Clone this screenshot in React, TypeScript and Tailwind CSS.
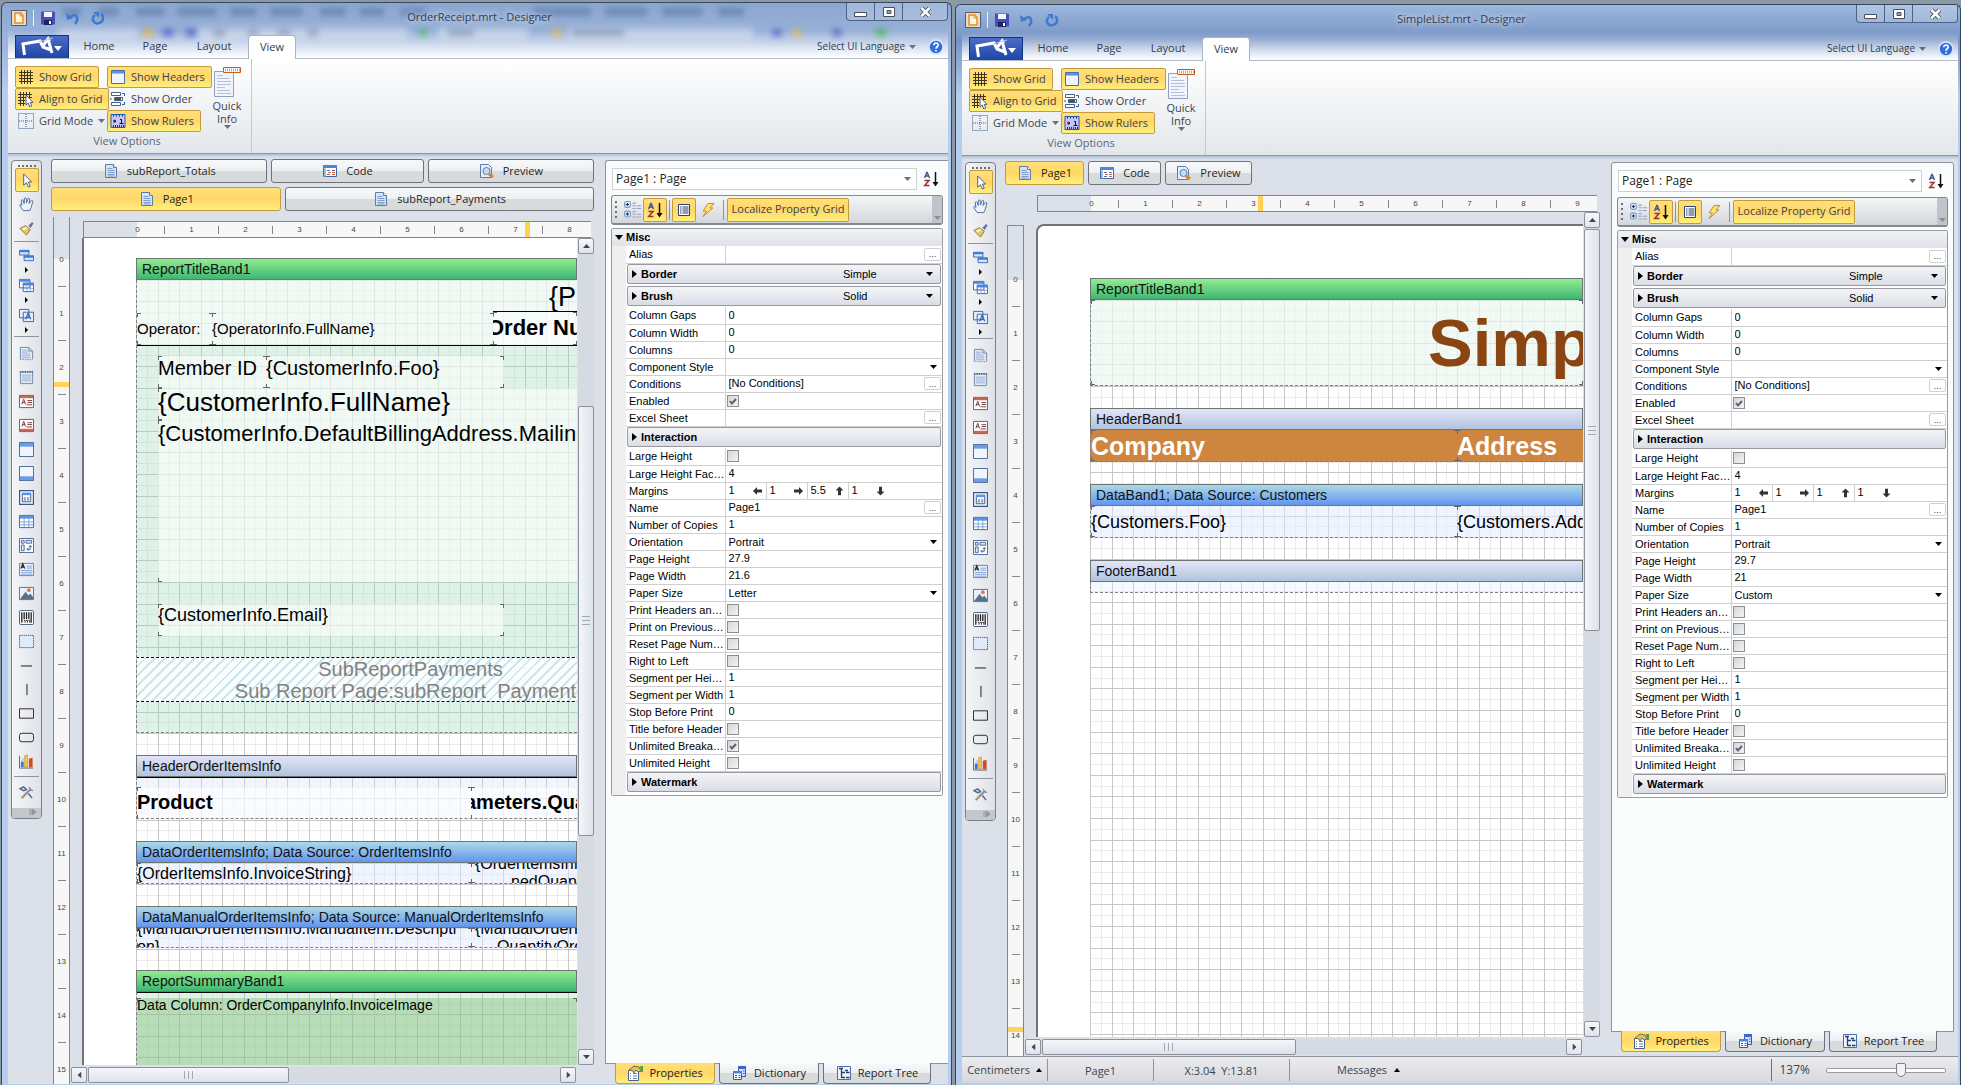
import { useId, type ReactNode } from "react";
import clsx from "clsx";

const pressed = "border border-[#c29b3c] bg-linear-to-b from-[#ffe07a] via-[#ffd768] to-[#fff07c]";
const raised = "border border-[#6f7278] bg-linear-to-b from-[#f8f9fa] from-0% via-[#eeeff0] via-50% to-[#d8dbdc] to-52%";

/* ---------- icons ---------- */

type IconProps = { children: ReactNode; size?: number };

function Icon({ children, size = 16 }: IconProps) {
  return (
    <svg width={size} height={size} viewBox="0 0 16 16" fill="none" className="shrink-0" aria-hidden="true">
      {children}
    </svg>
  );
}

const PageIcon = () => (
  <Icon>
    <path d="M2.5 1.5h8l3 3v10h-11z" fill="#d5e3f7" stroke="#5d7ca8" />
    <path d="M10.5 1.5v3h3" fill="#fff" stroke="#5d7ca8" />
    <path d="M4.5 5.5h5M4.5 7.5h7M4.5 9.5h7M4.5 11.5h7M4.5 13h7" stroke="#7f9cc8" />
  </Icon>
);

const CodeIcon = () => (
  <Icon>
    <path d="M1.5 2.5h13v11h-13z" fill="#fff" stroke="#3f66a8" />
    <path d="M1 2h14v3H1z" fill="#4f86dc" />
    <path d="M3 5.5v8" stroke="#9db9e4" strokeWidth="2" />
    <path d="M5 7.5h3M10 7.5h3M5 11.5h3" stroke="#5a6f97" />
    <path d="M6 9.5h3M10 9.5h3M10 11.5h3" stroke="#e0603c" />
  </Icon>
);

const PreviewIcon = () => (
  <Icon>
    <path d="M1.5 1.5h8l3 3v10h-11z" fill="#e6eefb" stroke="#5d7ca8" />
    <circle cx="7.5" cy="8" r="3.5" fill="#bfe0f7" stroke="#5b7ba6" />
    <path d="M10 11l4 3" stroke="#d98726" strokeWidth="3" />
  </Icon>
);

const GridIcon = () => (
  <Icon>
    <path d="M3.5 1v14M6.5 1v14M9.5 1v14M12.5 1v14M1 3.5h14M1 6.5h14M1 9.5h14M1 12.5h14" stroke="#3c3524" />
  </Icon>
);

const AlignIcon = () => (
  <Icon>
    <path d="M2.5 1v14M5.5 1v14M8.5 1v6M11.5 1v5M0 3.5h14M0 6.5h14M0 9.5h7M0 12.5h7" stroke="#3c3524" />
    <path d="M8 4v10l2.2-2 1.6 4 2-1-1.6-3.6H15z" fill="#fff" stroke="#4a5f88" />
  </Icon>
);

const GridModeIcon = () => (
  <Icon>
    <path d="M.5.5h15v15H.5zM8 1v14M1 8h14" stroke="#3c5c98" strokeDasharray="1 1" />
  </Icon>
);

const HeadersIcon = () => (
  <Icon>
    <path d="M1.5 1.5h13v13h-13z" fill="#eef3fc" stroke="#4a6fae" />
    <path d="M2 2h12v2.5H2z" fill="#5c90e6" />
  </Icon>
);

const OrderIcon = () => (
  <Icon>
    <path d="M1.5 1.5h9v3h-9zM4.5 6.5h8v3h-8zM1.5 11.5h9v3h-9z" fill="#fff" stroke="#46618f" />
    <path d="M5 8h6" stroke="#111" strokeWidth="1.5" />
    <path d="M12 2.5h2.5V5M0 8h2M12 13.5h2.5V11" stroke="#2f5f9b" />
  </Icon>
);

const RulersIcon = () => (
  <Icon>
    <path d="M1 1.5h14v13H1z" fill="#c7c4fa" stroke="#1d5dab" />
    <path
      d="M3.5 12v2M5.5 12v2M7.5 12v2M9.5 12v2M11.5 12v2M13.5 12v2M3.5 2v1.5M6.5 2v1.5M9.5 2v1.5M12.5 2v1.5"
      stroke="#2b2c66"
    />
    <path d="M4 7v2.5L6 8zM10 6.5h1.5v4M9.5 10.5h4" stroke="#111" />
  </Icon>
);

const SortIcon = () => (
  <Icon>
    <path d="M1.5 7L3.8 1.5h.4L6.5 7M2.3 5h3.4" stroke="#3b5596" strokeWidth="1.4" />
    <path d="M1.5 9.5H6l-4.3 5h4.8" stroke="#9b3535" strokeWidth="1.5" />
    <path d="M12.5 1v12" stroke="#111" strokeWidth="1.5" />
    <path d="M9.5 11h6l-3 4.5z" fill="#111" />
  </Icon>
);

const CategoryIcon = () => (
  <Icon size={17}>
    <rect x=".5" y=".5" width="5.5" height="5.5" rx="1.5" fill="#dcebfb" stroke="#7b98c4" />
    <rect x=".5" y="9.5" width="5.5" height="5.5" rx="1.5" fill="#dcebfb" stroke="#7b98c4" />
    <path d="M3.2 1.8v3M1.7 3.3h3M3.2 10.8v3M1.7 12.3h3" stroke="#1c2c50" />
    <path d="M8 2h3M8 4.5h3M8 7h3M8 10h3M8 12.5h3M8 15h3M12 4.5h4M12 7h4M12 12.5h4M12 15h4" stroke="#93a5c2" />
  </Icon>
);

const ListIcon = () => (
  <Icon>
    <path d="M2.5 2.5h11v11h-11z" fill="#fff" stroke="#2e4373" />
    <path d="M4 5h1.5M4 7h1.5M4 9h1.5M4 11h1.5M6.5 5h6M6.5 7h6M6.5 9h6M6.5 11h6" stroke="#24396d" />
  </Icon>
);

const BoltIcon = () => (
  <Icon>
    <path d="M8 1.5h6L9.8 6h3L3 14.5 6.5 9H3.2z" fill="#ffe36b" stroke="#bd8f34" />
  </Icon>
);

const PropsIcon = () => (
  <Icon>
    <path d="M1.5 5.5h10v10h-10z" fill="#fff" stroke="#46618f" />
    <path d="M3.5 8v1M3.5 10.5v1M3.5 13v1M6 8.5h4M6 11h4M6 13.5h4" stroke="#6a82b0" />
    <path d="M2 5l5-4 5 1 2 4-3 1-2-2-2 3-1-2z" fill="#d8c17c" stroke="#7b6a35" />
    <path d="M13 1h3v6h-2z" fill="#4f9c4c" />
  </Icon>
);

const DictionaryIcon = () => (
  <Icon>
    <path d="M6.5 1.5h7v10h-7z" fill="#cfe0fb" stroke="#2f5bb7" />
    <path d="M6 1h8v3H6z" fill="#3768cf" />
    <path d="M1.5 6.5h8v8h-8z" fill="#fff" stroke="#2f5bb7" />
    <path d="M1 6h9v2.5H1z" fill="#4a80e4" />
    <path d="M3 10.5h2M6.5 10.5h2M3 12.5h2M6.5 12.5h2M11 6h1.5M11 8.5h1.5" stroke="#2f5bb7" />
  </Icon>
);

const TreeIcon = () => (
  <Icon>
    <path d="M1.5 1.5h13v13h-13z" fill="#eff4fd" stroke="#4b6ea6" />
    <path d="M3 3.5h4M5.5 4v9M6 7.5h3M6 12.5h3M10 7.5h3.5M10 12.5h3.5M9 5.5h3" stroke="#213f74" strokeWidth="1.3" />
  </Icon>
);

const blue = "#3c64ac";

const toolIcons: Record<string, ReactNode> = {
  Select: <path d="M5 1v12l3-2.6L10 15l2-.9-2-4.5h3.5z" fill="#fff" stroke="#46598a" />,
  Hand: (
    <path
      d="M4.500 14.500L1 9.500C.3 8 2 7.500 3 9L2.500 4C2.400 2.500 4 2.500 4.500 4l1 3L5.700 2C5.800.500 7.500.500 7.700 2L8 6.500 9.500 2c.5-1.300 2-.9 1.800.5L10.800 7l2.200-3c.8-1 2-.3 1.700 1L13 11l-1.500 3.500z"
      fill="#eef4fe"
      stroke="#4d6a9d"
    />
  ),
  Brush: (
    <>
      <path d="M10 5l4-4 1.5 1.5-3 5z" fill="#6a6da8" />
      <path d="M1 8l6-3 5 4-4 6z" fill="#e5c85f" stroke="#96782d" />
      <path d="M3 8l5-2 1 2-4 2z" fill="#fff6c5" />
    </>
  ),
  Bands: (
    <>
      <path d="M.5 2.5h10v5H.5zM5.5 8.5h10v5h-10z" fill="#d9e7fc" stroke={blue} />
      <path d="M0 2h11v2.5H0zM5 8h11v2.5H5z" fill="#3f7be0" />
    </>
  ),
  Crosses: (
    <>
      <path d="M.5 1.5h11v9H.5zM4.5 5.5h11v9h-11z" fill="#fff" stroke={blue} />
      <path d="M0 1h12v3H0zM4 5h12v3H4z" fill="#4d87e4" />
      <path d="M8.5 8v6M12 8v6M5 11h10" stroke="#86a9e2" />
    </>
  ),
  Components: (
    <>
      <path d="M.5 1.5h10v9H.5zM4.5 4.5h11v10h-11z" fill="#e4edfc" stroke={blue} />
      <path d="M7 12l2.5-6h.5l2.5 6M8 10h3.5" stroke={blue} strokeWidth="1.3" />
    </>
  ),
  "Report title": (
    <>
      <path d="M1.5 1.5h9l4 4v9h-13z" fill="#dfe9f8" />
      <path d="M1.5 14V1.5h9l4 4V14M10.5 1.5v4h4" stroke="#7287a9" />
      <path d="M3 4.5h6M3 6.5h6M3 8.5h9M3 10.5h9M3 12.5h9" stroke="#9db0cf" />
      <path d="M1.5 14.5h13" stroke="#7287a9" strokeDasharray="1.5 1" />
    </>
  ),
  "Report summary": (
    <>
      <path d="M1.5 2v12.5h13V2z" fill="#dfe9f8" stroke="#7287a9" />
      <path d="M3 5.5h10M3 7.5h10M3 9.5h10M3 11.5h10" stroke="#9db0cf" />
      <path d="M1 2h14" stroke="#56698c" strokeWidth="2" strokeDasharray="1.5 1" />
    </>
  ),
  "Page header": (
    <>
      <path d="M.5 1.5h15v13H.5z" fill="#fff" stroke="#8d4a45" />
      <path d="M1 2h14v2.5H1z" fill="#c46a54" />
      <path d="M3 11l2-5.5L7 11M3.7 9.2h2.6M9 7h5M9 9h5M8 11.5h6" stroke="#7a3434" />
    </>
  ),
  "Page footer": (
    <>
      <path d="M.5 1.5h15v13H.5z" fill="#fff" stroke="#8d4a45" />
      <path d="M1 11.5h14V14H1z" fill="#c46a54" />
      <path d="M3 9l2-5.5L7 9M3.7 7.2h2.6M9 5h5M9 7h5M8 9.5h6" stroke="#7a3434" />
    </>
  ),
  "Header band": (
    <>
      <path d="M.5.5h15v15H.5z" fill="#eff4fd" stroke="#4a6291" />
      <path d="M1 1h14v4H1z" fill="#6b9cec" />
    </>
  ),
  "Footer band": (
    <>
      <path d="M.5.5h15v15H.5z" fill="#eff4fd" stroke="#4a6291" />
      <path d="M1 11h14v4H1z" fill="#6b9cec" />
    </>
  ),
  "Data band": (
    <>
      <path d="M.5.5h15v15H.5z" fill="#f5f8fe" stroke="#3d5687" strokeWidth="1.5" />
      <path d="M3.5 3.5h9v9h-9z" fill="#fff" stroke="#3d5687" />
      <path d="M3 3h10v2.5H3z" fill="#5d93ec" />
      <path d="M5 8.5h2.5M8.5 8.5H11M5 10.5h2.5M8.5 10.5H11" stroke="#3d5687" />
    </>
  ),
  Table: (
    <>
      <path d="M.5 1.5h15v13H.5z" fill="#fff" stroke="#4a6291" />
      <path d="M1 2h14v3H1z" fill="#5d93ec" />
      <path d="M5.5 5v9M10.5 5v9M1 8.5h14M1 11.5h14" stroke="#7f9dcf" />
    </>
  ),
  "Cross tab": (
    <>
      <path d="M.5.5h15v15H.5z" fill="#fff" stroke="#4a6291" />
      <path d="M2.5 2.5h3v3h-3zM7.5 2.5h6v3h-6zM2.5 7.5h3v6h-3z" fill="#dbe7fb" stroke="#4a6291" />
      <path d="M12 8v4H8.5M10.5 9.5L12 8l1.5 1.5M10 10.5L8.5 12l1.5 1.5" stroke="#30609f" />
    </>
  ),
  Text: (
    <>
      <path d="M.5 1.5h15v13H.5z" fill="#e7effc" stroke="#6581b3" />
      <path d="M2 7l2-5 2 5M2.7 5.5h2.6" stroke="#222" strokeWidth="1.3" />
      <path d="M8 4.5h6M8 6.5h6M2 9h12M2 11h12M2 13h12" stroke="#86a5dc" />
    </>
  ),
  Image: (
    <>
      <path d="M.5 1.5h15v13H.5z" fill="#e9f1fd" stroke="#4a6fae" />
      <path d="M1 14l6-8 3 4 2-2 3 4v2z" fill="#5c7188" />
      <circle cx="10.5" cy="4.5" r="2" fill="#e2794a" />
    </>
  ),
  "Bar code": (
    <>
      <rect x=".5" y=".5" width="15" height="15" rx="1.5" fill="#fff" stroke="#44587e" />
      <path d="M3 2.5v11M5.5 2.5v7M8 2.5v7M10.5 2.5v7M13 2.5v11" stroke="#222" strokeWidth="1.4" />
      <path d="M5 11h1.5v2.5M7.5 11H9v2.5M10 11h1.5v2.5" stroke="#222" />
    </>
  ),
  Panel: <path d="M.5 1.5h15v13H.5z" fill="#dfeafb" stroke="#2f62c4" strokeDasharray="1.5 .7" />,
  "Horizontal line": <path d="M2 8.5h12" stroke="#111" />,
  "Vertical line": <path d="M8.5 2v12" stroke="#111" />,
  Rectangle: <path d="M.5 3h15v10H.5z" stroke="#222" />,
  "Rounded rectangle": <rect x=".5" y="3.5" width="15" height="9" rx="2.5" stroke="#222" />,
  Chart: (
    <>
      <path d="M.5 2v13H15" stroke="#53617d" />
      <path d="M2 8h3v6H2z" fill="#3e74d6" />
      <path d="M6 2l3-1v13H6z" fill="#f7c843" stroke="#b98a1c" strokeWidth=".6" />
      <path d="M10.5 5l4-1v10h-4z" fill="#cf4a2c" />
      <path d="M2 8l2-4 1.5 1V8z" fill="#b9d0f5" />
    </>
  ),
  Services: (
    <>
      <path d="M3 14L13 4" stroke="#8a8f99" strokeWidth="2" />
      <path d="M1 4l4-2 3 3-3 1zM10 9l4 5" stroke="#56698c" strokeWidth="1.6" />
      <path d="M11 2l1 3 3 1" stroke="#7f93b2" strokeWidth="1.5" />
      <path d="M8 7l-6 7" stroke="#d8a545" />
    </>
  ),
};

const Caret = ({ className = "text-[#6a6f7c]" }: { className?: string }) => (
  <svg width="7" height="4" viewBox="0 0 7 4" className={clsx("shrink-0", className)} aria-hidden="true">
    <path d="M0 0h7L3.5 4z" fill="currentColor" />
  </svg>
);

/* ---------- window chrome ---------- */

function TitleBar({ title }: { title: string }) {
  return (
    <header className="flex h-8 items-start pl-[3px]">
      <div className="flex w-[168px] items-center gap-[9px] pt-[7px]">
        <Icon>
          <path d="M.5.5h15v15H.5z" fill="#e3dfd3" stroke="#575b63" />
          <path d="M4 3h5.5L12 5.5V13H4z" fill="#fff6e2" stroke="#f08a1b" strokeWidth="1.5" />
          <path d="M9 3v3h3" stroke="#f08a1b" />
        </Icon>
        <span className="-mx-[3px] h-4 w-px bg-[#eef3fa]" />
        <button aria-label="Save">
          <Icon>
            <path d="M1 1.5h13l1 1v12H1z" fill="#4a4fb8" />
            <path d="M4 2h8v5H4z" fill="#f2f5ff" />
            <path d="M4 10h8v5H4z" fill="#1d2260" />
            <path d="M9 11h2v3H9z" fill="#fff" />
          </Icon>
        </button>
        <button aria-label="Undo">
          <Icon>
            <path d="M5 8c5-7 10 0 5 6" stroke="#3f7ad0" strokeWidth="2.5" />
            <path d="M1 3l1 7 6-2z" fill="#3f7ad0" />
          </Icon>
        </button>
        <button aria-label="Redo">
          <Icon>
            <path d="M5 5c-5 4 0 10 4 8 5-1 5-7 2-9" stroke="#3f7ad0" strokeWidth="2.5" />
            <path d="M3 2h6v6z" fill="#3f7ad0" />
          </Icon>
        </button>
      </div>
      <h1 className="flex-1 pt-1 text-center text-[11px] leading-5 text-[#333c4d] [text-shadow:0_0_6px_#fff]">{title}</h1>
      <div className="flex w-[168px] justify-end">
        <div className="flex h-[18px] overflow-hidden rounded-b border border-t-0 border-[#4c6286] bg-white/20">
          <button aria-label="Minimize" className="grid w-7 place-items-center border-r border-[#4c6286]">
            <svg width="13" height="12" fill="none" aria-hidden="true">
              <path d="M.5 6.5h12v4H.5z" fill="#fff" stroke="#4a4f5c" />
            </svg>
          </button>
          <button aria-label="Maximize" className="grid w-7 place-items-center border-r border-[#4c6286]">
            <svg width="12" height="11" fill="none" aria-hidden="true">
              <path d="M.5 1.5h11v9H.5z" fill="#fff" stroke="#4a4f5c" />
              <path d="M4 4.5h4v3H4z" fill="#8ba5cf" stroke="#4a4f5c" />
            </svg>
          </button>
          <button aria-label="Close" className="grid w-11 place-items-center">
            <svg width="13" height="12" fill="none" aria-hidden="true">
              <path d="M2.5 2l8 8M10.5 2l-8 8" stroke="#4a4f5c" strokeWidth="4.5" />
              <path d="M2.5 2l8 8M10.5 2l-8 8" stroke="#fff" strokeWidth="2.5" />
            </svg>
          </button>
        </div>
      </div>
    </header>
  );
}

function RibbonTabs() {
  return (
    <nav className="flex h-[23px] items-stretch pl-[7px] text-[11px] text-[#333c4d]">
      <button
        aria-label="Application menu"
        className="w-[54px] border border-b-0 border-[#16307f] bg-linear-to-b from-[#4a6cc6] to-[#1f45a8]"
      >
        <svg width="52" height="22" viewBox="0 0 52 22" fill="none" aria-hidden="true">
          <path d="M8.5 19L7 8l17-3 3 6 8 3M26 11l6-8 4 14" stroke="#fff" strokeWidth="3" />
          <path d="M23 6l14-4M32 0l3 5" stroke="#b8c8f0" />
          <path d="M38 10h8l-4 5z" fill="#fff" />
        </svg>
      </button>
      <button className="ml-[10px] w-10">Home</button>
      <button className="ml-4 w-10">Page</button>
      <button className="ml-[14px] w-[50px]">Layout</button>
      <button className="-mb-px ml-[9px] w-12 rounded-t border border-b-0 border-[#a9b2c0] bg-white pb-px">View</button>
      <span className="flex-1" />
      <button className="flex items-center gap-1 pr-3 text-[10px]">
        Select UI Language
        <Caret />
      </button>
      <button aria-label="Help" className="mr-1 self-center">
        <Icon>
          <circle cx="8" cy="8" r="7" fill="#2f6fe0" stroke="#dbe8fb" strokeWidth="1.5" />
          <path d="M5.800 6.200c0-3 4.600-2.800 4.400 0C10 7.800 8 7.800 8 9.800M8 11v1.500" stroke="#fff" strokeWidth="1.7" />
        </Icon>
      </button>
    </nav>
  );
}

type RibbonButtonProps = { icon: ReactNode; label: string; on?: boolean; menu?: boolean };

function RibbonButton({ icon, label, on, menu }: RibbonButtonProps) {
  return (
    <button
      aria-pressed={on}
      className={clsx(
        "flex h-[22px] items-center gap-[5px] rounded-[2px] pr-[6px] pl-[2px] whitespace-nowrap",
        on ? pressed : "border border-transparent",
      )}
    >
      {icon}
      {label}
      {menu && <Caret />}
    </button>
  );
}

function Ribbon() {
  return (
    <div className="h-24 border-y border-[#8d97a5] border-t-[#b3bac4] bg-linear-to-b from-white to-[#e3e7eb] text-[11px] text-[#3d434d]">
      <div className="flex h-full w-[244px] flex-col border-r border-[#c4cad2] pt-[7px] pl-[7px]">
        <div className="flex">
          <div className="flex w-[92px] flex-col items-start">
            <RibbonButton icon={<GridIcon />} label="Show Grid" on />
            <RibbonButton icon={<AlignIcon />} label="Align to Grid" on />
            <RibbonButton icon={<GridModeIcon />} label="Grid Mode" menu />
          </div>
          <div className="flex w-[102px] flex-col items-start">
            <RibbonButton icon={<HeadersIcon />} label="Show Headers" on />
            <RibbonButton icon={<OrderIcon />} label="Show Order" />
            <RibbonButton icon={<RulersIcon />} label="Show Rulers" on />
          </div>
          <button className="flex w-9 flex-col items-center leading-[13px]">
            <svg width="29" height="32" fill="none" className="mb-px" aria-hidden="true">
              <path d="M1.5 5.5h19v25h-19z" fill="#f1f4fc" stroke="#8fa0c2" />
              <path d="M4 9.5h6M4 12.5h13M4 15.5h14M4 18.5h14M4 21.5h8M4 24.5h13M4 27.5h14" stroke="#b5c1da" />
              <path d="M10.5 1.5h17v5h-17z" fill="#fff" stroke="#c4601b" />
              <path d="M12 4h15" stroke="#a9a9b8" strokeWidth="3" strokeDasharray="1 1" />
            </svg>
            Quick
            <br />
            Info
            <Caret />
          </button>
        </div>
        <div className="pt-px pr-3 text-center leading-4 text-[#5b6675]">View Options</div>
      </div>
    </div>
  );
}

function Toolbox() {
  const groups = [
    ["Select", "Hand", "Brush"],
    ["Bands", "Crosses", "Components"],
    Object.keys(toolIcons).slice(6, -1),
    ["Services"],
  ];
  const groupPadding = ["", "pt-1", "pt-1 pb-[3px]", "pt-[3px]"];

  return (
    <aside className="mt-[6px] flex w-[31px] shrink-0 flex-col self-start overflow-hidden rounded border border-[#7a808a] bg-linear-to-r from-[#f4f5f7] to-[#dfe2e7] pt-1">
      <div className="mx-auto mb-px h-[2px] w-[18px] bg-[repeating-linear-gradient(to_right,#6a707a_0_2px,transparent_2px_4px)]" />
      {groups.map((names, g) => (
        <div
          key={names[0]}
          className={clsx("mx-[2px] flex flex-col items-center border-[#8e949e]", g > 0 && "border-t", groupPadding[g])}
        >
          {names.map((name) => (
            <div key={name} className="flex flex-col items-center">
              <button
                aria-label={name}
                className={clsx(
                  "grid w-6 place-items-center rounded-[2px]",
                  name === "Select" && pressed,
                  g === 1 ? "h-[18px]" : "h-6",
                  name === "Brush" && "mb-px",
                )}
              >
                <Icon size={15}>{toolIcons[name]}</Icon>
              </button>
              {g === 1 && (
                <svg width="4" height="6" className="my-[3px]" aria-hidden="true">
                  <path d="M0 0v6l3-3z" />
                </svg>
              )}
            </div>
          ))}
        </div>
      ))}
      <div className="mt-1 h-[10px] bg-[#c3c7ce] pr-1 text-right">
        <svg width="8" height="8" className="inline-block align-top" aria-hidden="true">
          <path d="M1 1v6M3 1v6l4-3z" stroke="#8f949e" fill="#8f949e" />
        </svg>
      </div>
    </aside>
  );
}

/* ---------- designer surface ---------- */

type Tab = { icon: ReactNode; label: string; on?: boolean };

function PageTab({ icon, label, on, className }: Tab & { className?: string }) {
  return (
    <button className={clsx("flex h-6 items-center justify-center gap-2 rounded-[3px] text-[11px]", on ? pressed : raised, className)}>
      {icon}
      {label}
    </button>
  );
}

type RulerProps = { vertical?: boolean; marker: number; short?: boolean };

function Ruler({ vertical, marker, short }: RulerProps) {
  const count = vertical ? 34 : 20;
  return (
    <div
      aria-hidden="true"
      className={clsx(
        "relative flex overflow-hidden border-[#80868f] font-['Liberation_Sans',Arial,sans-serif] text-[8px] leading-none text-[#444]",
        vertical ? "w-[17px] flex-1 flex-col border-x" : "h-[17px] border-y border-l",
        !vertical && "bg-linear-[to_right,#dce1e9_53px,#f7f7f7_53px] pl-10",
        vertical && !short && "border-t bg-linear-[to_bottom,#dce1e9_54px,#f7f7f7_54px] pt-10",
        vertical && short && "bg-linear-[to_bottom,#dce1e9_42px,#f7f7f7_42px] pt-[29px]",
      )}
    >
      <span
        className={clsx("absolute", vertical ? "inset-x-0 h-[5px] bg-[#ffd45a]" : "inset-y-0 w-[5px] bg-[#ffd054]")}
        style={vertical ? { top: marker } : { left: marker }}
      />
      {Array.from({ length: count }, (_, i) => (
        <span key={i} className={clsx("relative grid shrink-0 place-items-center", vertical ? "h-[27px]" : "w-[27px]")}>
          {i % 2 === 0 ? i / 2 : <i className={clsx("block bg-[#888]", vertical ? "h-px w-2" : "h-2 w-px")} />}
        </span>
      ))}
    </div>
  );
}

const scrollButton =
  "grid size-4 shrink-0 place-items-center rounded-[2px] border border-[#8b929e] bg-linear-to-b from-[#f5f7fa] to-[#dfe4ec]";

type ScrollProps = { vertical?: boolean; parts: [number, number, number] };

function ScrollBar({ vertical, parts }: ScrollProps) {
  const [before, thumb, after] = parts;
  return (
    <div className={clsx("flex gap-px bg-[#d6dae2]", vertical ? "w-4 flex-col" : "h-4")}>
      <button aria-label={vertical ? "Scroll up" : "Scroll left"} className={scrollButton}>
        <Caret className={vertical ? "rotate-180 text-[#444]" : "rotate-90 text-[#444]"} />
      </button>
      {before > 0 && <span className="basis-0" style={{ flexGrow: before }} />}
      <span
        className={clsx(
          "grid basis-0 place-items-center rounded-[2px] border border-[#8b929e] from-[#f4f6fa] to-[#dde2ea]",
          vertical ? "bg-linear-to-r" : "bg-linear-to-b",
        )}
        style={{ flexGrow: thumb }}
      >
        <i
          className={clsx(
            "block",
            vertical
              ? "h-[9px] w-2 bg-[repeating-linear-gradient(to_bottom,#a4aab4_0_1px,transparent_1px_4px)]"
              : "h-2 w-[9px] bg-[repeating-linear-gradient(to_right,#a4aab4_0_1px,transparent_1px_4px)]",
          )}
        />
      </span>
      <span className="basis-0" style={{ flexGrow: after }} />
      <button aria-label={vertical ? "Scroll down" : "Scroll right"} className={scrollButton}>
        <Caret className={vertical ? "text-[#444]" : "-rotate-90 text-[#444]"} />
      </button>
    </div>
  );
}

// 0.4 cm major lines with 0.2 cm minor lines between them
function PageGrid() {
  const id = useId();
  const major = [0, 22, 43, 65, 86];
  const minor = [11, 32, 54, 76, 97];
  const path = (at: number[]) => at.map((n) => `M${n + 0.5} 0v108M0 ${n + 0.5}h108`).join("");
  return (
    <svg className="absolute inset-0 size-full" aria-hidden="true">
      <pattern id={id} width="108" height="108" patternUnits="userSpaceOnUse">
        <path d={path(minor)} stroke="#ececec" />
        <path d={path(major)} stroke="#c6c6c6" />
      </pattern>
      <rect width="100%" height="100%" fill={`url(#${id})`} />
    </svg>
  );
}

const bandHeads = {
  report: "from-[#8fee90] to-[#3fb573]",
  header: "from-[#e4e4f8] to-[#b0c4de]",
  data: "from-[#add8e6] to-[#6495ed]",
};

type BandProps = {
  name: string;
  kind: keyof typeof bandHeads;
  bodyClass: string;
  children?: ReactNode;
};

function Band({ name, kind, bodyClass, children }: BandProps) {
  return (
    <div className="relative mb-[22px]">
      <div className={clsx("h-[22px] border border-[#6d7572] bg-linear-to-b pl-[5px] text-sm leading-5 text-[#111]", bandHeads[kind])}>
        {name}
      </div>
      <div className={clsx("relative overflow-hidden border-b border-l border-dashed border-[#808080]", bodyClass)}>{children}</div>
    </div>
  );
}

// Text component on a band; the brackets mark the corners of its frame
function Box({ className, marks, children }: { className: string; marks?: boolean; children?: ReactNode }) {
  return (
    <div className={clsx("absolute overflow-hidden leading-none whitespace-nowrap text-black", className)}>
      {marks && (
        <>
          <i className="absolute top-0 left-0 size-1 border-t border-l border-[#666]" />
          <i className="absolute top-0 right-0 size-1 border-t border-r border-[#666]" />
          <i className="absolute bottom-0 left-0 size-1 border-b border-l border-[#666]" />
          <i className="absolute right-0 bottom-0 size-1 border-r border-b border-[#666]" />
        </>
      )}
      {children}
    </div>
  );
}

const mint = "bg-[rgb(156_214_180/0.32)]";

function OrderReceiptPage() {
  return (
    <>
      <Band name="ReportTitleBand1" kind="report" bodyClass={clsx("h-[453px]", mint)}>
        <Box className="inset-x-0 top-0 h-[65px] bg-white/55" />
        <Box className="top-[33px] left-0 h-8 w-[76px] pt-2 text-[15px]" marks>
          Operator:
        </Box>
        <Box className="top-[33px] left-[75px] h-8 w-[282px] pt-2 text-[15px]" marks>
          {"{OperatorInfo.FullName}"}
        </Box>
        <Box className="top-[4px] right-0 left-[412px] h-[28px] text-[27px]">{"{P"}</Box>
        <Box
          className="top-[31px] right-0 left-[356px] h-[34px] border-t border-black bg-white/50 pt-[5px] -indent-[6px] text-[22px] font-bold"
          marks
        >
          Order Num
        </Box>
        <div className="absolute inset-x-0 top-[65px] border-t border-black" />
        <Box className="top-[76px] left-[21px] h-8 w-[109px] bg-white/55 pt-[2px] text-xl leading-none" marks>
          Member ID
        </Box>
        <Box className="top-[76px] left-[129px] h-8 w-[238px] bg-white/55 pt-[2px] text-xl leading-none" marks>
          {"{CustomerInfo.Foo}"}
        </Box>
        <Box className="top-[108px] left-[21px] h-8 w-[600px] bg-white/55 pt-px text-[26px]" marks>
          {"{CustomerInfo.FullName}"}
        </Box>
        <Box className="top-[140px] left-[21px] h-[162px] w-[600px] bg-white/55 pt-[3px] text-[22px]" marks>
          {"{CustomerInfo.DefaultBillingAddress.Mailing"}
        </Box>
        <Box className="top-[324px] left-[21px] h-8 w-[346px] bg-white/55 pt-[2px] text-lg leading-none" marks>
          {"{CustomerInfo.Email}"}
        </Box>
        <Box className="top-[377px] -left-px h-[45px] w-[549px] border border-dashed border-black bg-white/90">
          <div className="h-full bg-[repeating-linear-gradient(135deg,transparent_0_5px,#cbe6ee_5px_7px)] text-center text-xl leading-[22px] text-[#828282]">
            SubReportPayments
            <br />
            Sub Report Page:subReport_Payments
          </div>
        </Box>
      </Band>

      <Band name="HeaderOrderItemsInfo" kind="header" bodyClass="h-[42px] bg-[rgb(214_222_245/0.3)]">
        <div className="absolute inset-x-0 top-0 border-t border-black" />
        <Box className="top-[10px] left-0 h-8 w-[335px] bg-white/60 pt-[5px] text-xl leading-none font-bold" marks>
          Product
        </Box>
        <Box className="top-[10px] left-[334px] h-8 w-[200px] bg-white/60 pt-[5px] -indent-[6px] text-xl leading-none font-bold" marks>
          ameters.Quan
        </Box>
      </Band>

      <Band name="DataOrderItemsInfo; Data Source: OrderItemsInfo" kind="data" bodyClass="h-[21px] bg-[rgb(226_234_254/0.5)]">
        <Box className="inset-y-0 left-0 w-[335px] pt-[3px] text-base leading-none" marks>
          {"{OrderItemsInfo.InvoiceString}"}
        </Box>
        <Box className="inset-y-0 left-[334px] w-[200px] text-base" marks>
          <div className="-mt-2 pl-1 leading-[18px]">{"{OrderItemsInfo"}</div>
          <div className="pl-10 leading-[18px]">nedQuantity</div>
        </Box>
      </Band>

      <Band name="DataManualOrderItemsInfo; Data Source: ManualOrderItemsInfo" kind="data" bodyClass="h-[20px] bg-[rgb(226_234_254/0.5)]">
        <Box className="inset-y-0 left-0 w-[335px] text-base" marks>
          <div className="-mt-2 leading-[18px]">{"{ManualOrderItemsInfo.ManualItem.Descripti"}</div>
          <div className="leading-[18px]">{"on}"}</div>
        </Box>
        <Box className="inset-y-0 left-[334px] w-[200px] text-base" marks>
          <div className="-mt-2 pl-1 leading-[18px]">{"{ManualOrderI"}</div>
          <div className="pl-[26px] leading-[18px]">QuantityOrd</div>
        </Box>
      </Band>

      <Band name="ReportSummaryBand1" kind="report" bodyClass={clsx("h-[140px]", mint)}>
        <div className="absolute inset-x-0 top-0 border-t border-black" />
        <Box className="inset-x-0 top-[6px] bottom-0 bg-[rgb(130_190_120/0.42)] text-sm leading-[18px]" marks>
          Data Column: OrderCompanyInfo.InvoiceImage
        </Box>
      </Band>
    </>
  );
}

function SimpleListPage() {
  return (
    <>
      <Band name="ReportTitleBand1" kind="report" bodyClass={clsx("h-[86px]", mint)}>
        <Box className="inset-0 bg-white/55" marks />
        <Box className="top-[9px] left-[337px] h-[70px] text-[67px] font-bold">
          <span className="text-[#8b4513]">Simple</span>
        </Box>
      </Band>
      <Band name="HeaderBand1" kind="header" bodyClass="h-[32px] bg-[#cd853f]">
        <Box className="inset-y-0 left-0 w-[367px] pt-1 text-[25px] font-bold" marks>
          <span className="text-white">Company</span>
        </Box>
        <Box className="inset-y-0 left-[366px] w-[300px] pt-1 text-[25px] font-bold" marks>
          <span className="text-white">Address</span>
        </Box>
      </Band>
      <Band name="DataBand1; Data Source: Customers" kind="data" bodyClass="h-[32px] bg-[rgb(226_234_254/0.5)]">
        <Box className="inset-y-0 left-0 w-[367px] pt-[7px] text-lg leading-none" marks>
          {"{Customers.Foo}"}
        </Box>
        <Box className="inset-y-0 left-[366px] w-[300px] pt-[7px] text-lg leading-none" marks>
          {"{Customers.Addr"}
        </Box>
      </Band>
      <Band name="FooterBand1" kind="header" bodyClass="h-[11px] bg-[rgb(226_234_254/0.3)]" />
    </>
  );
}

/* ---------- property panel ---------- */

type PropRow = { name: string; kind: "group" | "text" | "more" | "select" | "check" | "margins"; value?: string };

function propertyRows(top: string, height: string, width: string, paper: string): PropRow[] {
  return [
    { name: "Alias", kind: "more" },
    { name: "Border", kind: "group", value: "Simple" },
    { name: "Brush", kind: "group", value: "Solid" },
    { name: "Column Gaps", kind: "text", value: "0" },
    { name: "Column Width", kind: "text", value: "0" },
    { name: "Columns", kind: "text", value: "0" },
    { name: "Component Style", kind: "select" },
    { name: "Conditions", kind: "more", value: "[No Conditions]" },
    { name: "Enabled", kind: "check", value: "on" },
    { name: "Excel Sheet", kind: "more" },
    { name: "Interaction", kind: "group" },
    { name: "Large Height", kind: "check" },
    { name: "Large Height Factor", kind: "text", value: "4" },
    { name: "Margins", kind: "margins", value: `1 1 ${top} 1` },
    { name: "Name", kind: "more", value: "Page1" },
    { name: "Number of Copies", kind: "text", value: "1" },
    { name: "Orientation", kind: "select", value: "Portrait" },
    { name: "Page Height", kind: "text", value: height },
    { name: "Page Width", kind: "text", value: width },
    { name: "Paper Size", kind: "select", value: paper },
    { name: "Print Headers and Footers", kind: "check" },
    { name: "Print on Previous Page", kind: "check" },
    { name: "Reset Page Number", kind: "check" },
    { name: "Right to Left", kind: "check" },
    { name: "Segment per Height", kind: "text", value: "1" },
    { name: "Segment per Width", kind: "text", value: "1" },
    { name: "Stop Before Print", kind: "text", value: "0" },
    { name: "Title before Header", kind: "check" },
    { name: "Unlimited Breakable", kind: "check", value: "on" },
    { name: "Unlimited Height", kind: "check" },
    { name: "Watermark", kind: "group" },
  ];
}

const marginTurns = ["rotate-0", "rotate-180", "rotate-90", "-rotate-90"];

function PropertyEditor({ row, id }: { row: PropRow; id: string }) {
  if (row.kind === "check") {
    return (
      <span className="grid w-3 pl-px">
        <input
          id={id}
          type="checkbox"
          defaultChecked={row.value === "on"}
          className="peer size-3 appearance-none border border-[#8e8f8f] bg-linear-to-br from-[#d3d6db] to-[#f4f4f4] [grid-area:1/1]"
        />
        <svg width="12" height="12" fill="none" className="invisible peer-checked:visible [grid-area:1/1]" aria-hidden="true">
          <path d="M3 6l2 2.5L9 4" stroke="#5a6172" strokeWidth="2" />
        </svg>
      </span>
    );
  }
  if (row.kind === "select") {
    return (
      <span className="flex items-center pr-[5px]">
        <select id={id} className="h-4 min-w-0 flex-1 appearance-none pl-[3px]">
          <option>{row.value}</option>
        </select>
        <Caret className="text-black" />
      </span>
    );
  }
  if (row.kind === "margins") {
    return (
      <span className="flex">
        {row.value?.split(" ").map((v, i) => (
          <span key={i} className={clsx("flex w-[41px] items-center border-[#cfcfcf]", i < 3 && "border-r")}>
            <input id={i === 0 ? id : undefined} aria-label={`Margin ${i + 1}`} defaultValue={v} className="h-4 w-[27px] pl-[3px]" />
            <svg width="9" height="8" className={clsx("shrink-0", marginTurns[i])} aria-hidden="true">
              <path d="M0 4l4-4v2.500h5v3H4V8z" fill="#333" />
            </svg>
          </span>
        ))}
      </span>
    );
  }
  return (
    <span className="flex items-center pr-px">
      <input id={id} defaultValue={row.value} className="h-4 min-w-0 flex-1 pl-[3px]" />
      {row.kind === "more" && (
        <button
          aria-label={`Edit ${row.name}`}
          className="h-[13px] w-[17px] rounded-[2px] border border-[#cfcfd4] text-[9px] leading-[8px] text-[#444]"
        >
          ...
        </button>
      )}
    </span>
  );
}

function PropertyTable({ rows }: { rows: PropRow[] }) {
  const id = useId();
  return (
    <div className="mx-[5px] mt-[3px] overflow-hidden rounded-[2px] border border-[#999ca1] bg-[#efefef] font-['Liberation_Sans',Arial,sans-serif] text-[11px] text-black">
      <h3 className="flex h-[17px] items-center gap-[3px] bg-linear-to-b from-[#f1f2f4] to-[#dfe2e8] pl-[3px] font-bold">
        <svg width="8" height="5" aria-hidden="true">
          <path d="M0 0h8L4 5z" />
        </svg>
        Misc
      </h3>
      <div className="bg-white pb-[2px] pl-[14px] shadow-[inset_14px_0_0_#efefef]">
        <table className="w-full table-fixed border-collapse">
          <colgroup>
            <col className="w-[99px]" />
            <col />
          </colgroup>
          <tbody>
            {rows.map((row) =>
              row.kind === "group" ? (
                <tr key={row.name} className="h-[22px]">
                  <td colSpan={2} className="p-0 pr-px pl-px">
                    <button className="flex h-5 w-full items-center rounded-[2px] border border-[#97999e] bg-linear-to-b from-[#f4f5f6] to-[#dadde7] text-left">
                      <svg width="5" height="8" className="mr-1 ml-1" aria-hidden="true">
                        <path d="M0 0v8l5-4z" />
                      </svg>
                      <b className="w-[202px]">{row.name}</b>
                      <span className="flex-1">{row.value}</span>
                      {row.value && <Caret className="mr-[7px] text-black" />}
                    </button>
                  </td>
                </tr>
              ) : (
                <tr key={row.name} className="h-[17px] border-b border-[#cfcfcf]">
                  <th scope="row" className="truncate border-r border-[#cfcfcf] p-0 pl-[3px] text-left leading-4 font-normal">
                    <label htmlFor={id + row.name}>{row.name}</label>
                  </th>
                  <td className="p-0">
                    <PropertyEditor row={row} id={id + row.name} />
                  </td>
                </tr>
              ),
            )}
          </tbody>
        </table>
      </div>
    </div>
  );
}

const toolButton = "grid size-6 place-items-center rounded-[2px]";

function PropertyPanel({ rows, edge }: { rows: PropRow[]; edge?: boolean }) {
  const tabs: Tab[] = [
    { icon: <PropsIcon />, label: "Properties", on: true },
    { icon: <DictionaryIcon />, label: "Dictionary" },
    { icon: <TreeIcon />, label: "Report Tree" },
  ];

  return (
    <aside className="mt-[6px] ml-[11px] flex w-[343px] shrink-0 flex-col text-[11px]">
      <div className={clsx("flex-1 rounded-tl-[3px] border border-[#8e939b] bg-[#fbfdfd]", edge ? "rounded-tr-[3px]" : "border-r-0")}>
        <div className="flex items-center pt-[7px] pr-[9px] pl-[6px]">
          <div className="mr-[6px] flex flex-1 items-center border border-[#cdd0d5] bg-white pr-[5px]">
            <select aria-label="Component" className="h-5 flex-1 appearance-none pl-[3px] text-xs text-[#222]">
              <option>Page1 : Page</option>
            </select>
            <Caret />
          </div>
          <button aria-label="Sort">
            <SortIcon />
          </button>
        </div>
        <div className="mx-[5px] mt-[5px] flex h-[30px] items-center rounded-[3px] border border-b-2 border-[#84898f] bg-linear-to-b from-[#f5f6f7] to-[#d3d6dc] pl-[3px]">
          <span className="mr-[5px] h-[18px] w-[2px] bg-[repeating-linear-gradient(to_bottom,#6a707a_0_2px,transparent_2px_5px)]" />
          <button aria-label="Categories" className="mr-px grid size-5 place-items-center">
            <CategoryIcon />
          </button>
          <button aria-label="Alphabetical" className={clsx(toolButton, pressed)}>
            <SortIcon />
          </button>
          <span className="mx-[2px] h-5 w-px bg-[#8e939b]" />
          <button aria-label="Properties" className={clsx(toolButton, pressed)}>
            <ListIcon />
          </button>
          <button aria-label="Events" className={toolButton}>
            <BoltIcon />
          </button>
          <span className="mx-[3px] h-5 w-px bg-[#8e939b]" />
          <button className={clsx("h-6 w-[122px] rounded-[2px] whitespace-nowrap text-[#3d434d]", pressed)}>Localize Property Grid</button>
          <span className="ml-auto grid h-full w-[10px] place-items-center bg-[#bfc3ca] pt-4">
            <Caret className="text-[#8a8f99]" />
          </span>
        </div>
        <PropertyTable rows={rows} />
      </div>
      <div className="-mt-px flex gap-1 pl-[10px]">
        {tabs.map((tab) => (
          <button
            key={tab.label}
            className={clsx(
              "flex h-[21px] items-center justify-center gap-[6px] rounded-b-[4px] border-t-0 text-[#222]",
              tab.on ? pressed : raised,
              tab.label === "Report Tree" ? "w-[108px]" : "w-[100px]",
            )}
          >
            {tab.icon}
            {tab.label}
          </button>
        ))}
      </div>
    </aside>
  );
}

function StatusBar() {
  const up = (
    <svg width="6" height="4" aria-hidden="true">
      <path d="M0 4h6L3 0z" />
    </svg>
  );
  return (
    <footer className="flex h-[27px] items-center border-t border-[#8d939d] bg-linear-to-b from-[#ececef] to-[#d7d8dd] text-[11px] text-[#3d434d] *:h-[22px]">
      <button className="flex w-[86px] items-center justify-center gap-[6px] border-r border-[#8d939d]">Centimeters {up}</button>
      <span className="w-[106px] border-r border-[#8d939d] text-center leading-6">Page1</span>
      <span className="w-[136px] border-r border-[#8d939d] text-center leading-6 whitespace-pre">X:3.04  Y:13.81</span>
      <button className="ml-[47px] flex items-center gap-[7px]">Messages {up}</button>
      <span className="ml-auto flex items-center gap-4 border-l border-[#6b7078] pr-3 pl-[7px]">
        <label htmlFor="zoom" className="text-xs">
          137%
        </label>
        <input
          id="zoom"
          type="range"
          defaultValue={64}
          className="h-4 w-[120px] appearance-none bg-transparent [&::-webkit-slider-runnable-track]:h-[5px] [&::-webkit-slider-runnable-track]:rounded-[2px] [&::-webkit-slider-runnable-track]:border [&::-webkit-slider-runnable-track]:border-[#9a9da5] [&::-webkit-slider-runnable-track]:bg-white [&::-webkit-slider-thumb]:-mt-[6px] [&::-webkit-slider-thumb]:h-[14px] [&::-webkit-slider-thumb]:w-[10px] [&::-webkit-slider-thumb]:appearance-none [&::-webkit-slider-thumb]:rounded-t-[2px] [&::-webkit-slider-thumb]:rounded-b-[5px] [&::-webkit-slider-thumb]:border [&::-webkit-slider-thumb]:border-[#7d8089] [&::-webkit-slider-thumb]:bg-[#f3f3f5]"
        />
      </span>
    </footer>
  );
}

/* ---------- windows ---------- */

// Soft shapes of the window that lies behind the glass title bar
function GlassShapes() {
  return (
    <svg className="absolute inset-0 size-full blur-[3px]" viewBox="0 0 940 56" preserveAspectRatio="none" aria-hidden="true">
      <path
        d="M55 9h18M90 9h20M128 9h28M170 9h38M222 9h26M262 9h32M312 9h26M352 9h24M392 9h26M525 9h58M597 9h42M654 9h40M710 9h26"
        stroke="#3f5f93"
        strokeOpacity=".5"
        strokeWidth="7"
      />
      <path d="M50 31h80M190 31h210M430 31h90M560 31h185" stroke="#fff" strokeOpacity=".35" strokeWidth="12" />
      <path d="M440 31h26M564 31h52M205 31h12M240 31h10M270 31h12M300 31h10" stroke="#51627f" strokeOpacity=".5" strokeWidth="6" />
      <path d="M135 31h10M545 31h8M785 31h8" stroke="#d9b45a" strokeWidth="8" />
      <path d="M155 31h10M178 31h10M765 31h8M825 31h8" stroke="#5560c8" strokeWidth="8" />
      <path d="M412 31h6M868 31h10" stroke="#4bb35c" strokeWidth="8" />
    </svg>
  );
}

type WindowProps = {
  title: string;
  className: string;
  tabs: ReactNode;
  surface: ReactNode;
  panel: ReactNode;
  glass: string;
  backdrop?: ReactNode;
  status?: ReactNode;
};

function DesignerWindow({ title, className, tabs, surface, panel, glass, backdrop, status }: WindowProps) {
  return (
    <section
      className={clsx(
        "ml-px flex min-h-0 min-w-0 flex-col overflow-hidden rounded-t-[6px] border border-b-0 border-[#38465a] pl-[6px]",
        glass,
        className,
      )}
    >
      <div className="relative">
        {backdrop}
        <div className="relative bg-linear-to-b from-transparent from-50% to-white">
          <TitleBar title={title} />
          <RibbonTabs />
        </div>
      </div>
      <Ribbon />
      <div className="flex min-h-0 flex-1 bg-[#dce1e9] pl-[3px] shadow-[inset_0_3px_2px_-1px_#b4c3dc]">
        <Toolbox />
        <div className="ml-[9px] flex min-w-0 flex-1 flex-col pt-[5px] text-[#1e1e1e]">
          {tabs}
          {surface}
        </div>
        {panel}
      </div>
      {status}
    </section>
  );
}

type SurfaceProps = {
  children: ReactNode;
  rulers: [number, number];
  short?: boolean;
  vParts: [number, number, number];
  hParts: [number, number, number];
};

function Surface({ children, rulers, short, vParts, hParts }: SurfaceProps) {
  return (
    <div className="flex min-h-0 flex-1">
      <div className={clsx("ml-[2px] flex flex-col", short ? "pt-[6px]" : "pt-10")}>
        <Ruler vertical marker={rulers[1]} short={short} />
      </div>
      <div className="flex min-w-0 flex-1 flex-col pt-[10px]">
        <div className="mr-[3px] ml-[13px]">
          <Ruler marker={rulers[0]} />
        </div>
        <div className="flex min-h-0 flex-1">
          <div
            className={clsx(
              "ml-3 min-w-0 flex-1 overflow-hidden border-l-2 border-[#6f747c] bg-white pl-[52px]",
              short ? "pt-5" : "mt-3 rounded-tl-lg border-t-2 pt-[52px]",
            )}
          >
            <div className="relative h-full min-w-[300px] font-['Liberation_Sans',Arial,sans-serif]">
              <PageGrid />
              {children}
            </div>
          </div>
          <div className="ml-px flex">
            <ScrollBar vertical parts={vParts} />
          </div>
        </div>
        <div className="mt-[2px] mr-[18px] mb-px ml-px">
          <ScrollBar parts={hParts} />
        </div>
      </div>
    </div>
  );
}

export default function App() {
  return (
    <main className="grid h-screen grid-cols-[954fr_1007fr] overflow-hidden bg-[#8a98a8] font-['Segoe_UI','Open_Sans','Noto_Sans',sans-serif]">
      <DesignerWindow
        title="OrderReceipt.mrt - Designer"
        className="mt-[2px] mr-[2px] pr-[3px] pb-px"
        glass="bg-linear-to-b from-[#8ba7d0] from-0% via-[#9db5db] via-[40px] to-[#b7cdee] to-[90px]"
        backdrop={<GlassShapes />}
        tabs={
          <>
            <div className="grid grid-cols-[216fr_152fr_166fr] gap-1">
              <PageTab icon={<PageIcon />} label="subReport_Totals" />
              <PageTab icon={<CodeIcon />} label="Code" />
              <PageTab icon={<PreviewIcon />} label="Preview" />
            </div>
            <div className="mt-1 grid grid-cols-[230fr_308fr] gap-1">
              <PageTab icon={<PageIcon />} label="Page1" on />
              <PageTab icon={<PageIcon />} label="subReport_Payments" />
            </div>
          </>
        }
        surface={
          <Surface rulers={[441, 165]} short vParts={[151, 431, 213]} hParts={[0, 201, 272]}>
            <OrderReceiptPage />
          </Surface>
        }
        panel={<PropertyPanel rows={propertyRows("5.5", "27.9", "21.6", "Letter")} />}
      />
      <DesignerWindow
        title="SimpleList.mrt - Designer"
        className="mt-1 pr-[2px] pb-[2px]"
        glass="bg-linear-to-b from-[#9db8dd] from-0% via-[#7592c3] via-[36px] to-[#b7cdee] to-[90px]"
        tabs={
          <div className="flex gap-1">
            <PageTab icon={<PageIcon />} label="Page1" on className="w-[79px]" />
            <PageTab icon={<CodeIcon />} label="Code" className="w-[73px]" />
            <PageTab icon={<PreviewIcon />} label="Preview" className="w-[87px]" />
          </div>
        }
        surface={
          <Surface rulers={[220, 801]} vParts={[0, 400, 388]} hParts={[0, 253, 270]}>
            <SimpleListPage />
          </Surface>
        }
        panel={
          <div className="mr-1 mb-1 flex">
            <PropertyPanel rows={propertyRows("1", "29.7", "21", "Custom")} edge />
          </div>
        }
        status={<StatusBar />}
      />
    </main>
  );
}
